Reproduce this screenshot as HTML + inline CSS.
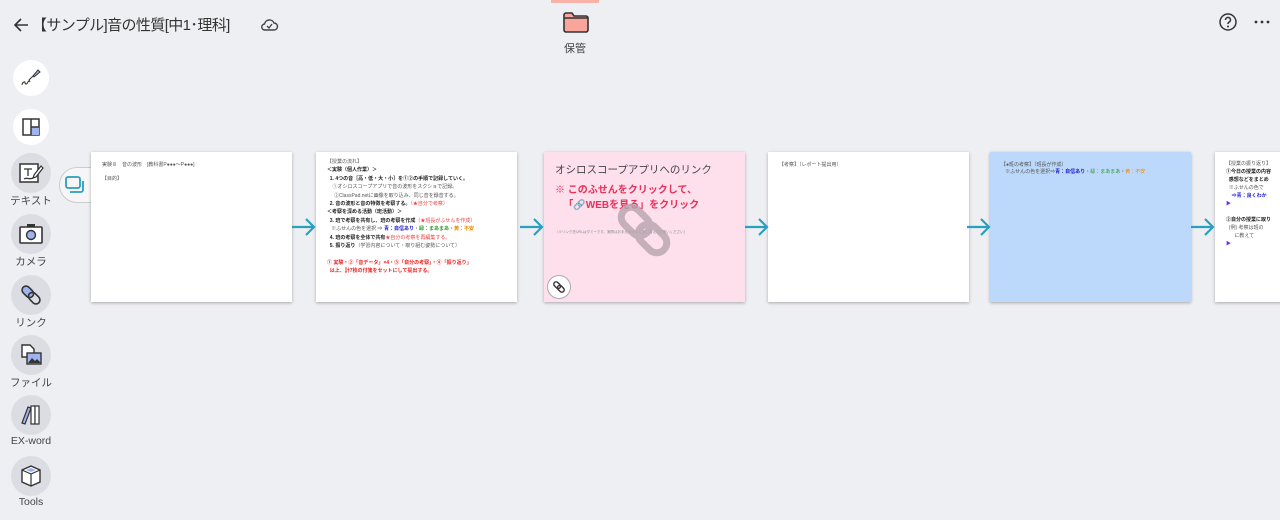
<!DOCTYPE html><html><head><meta charset="utf-8"><style>
*{margin:0;padding:0;box-sizing:border-box}
body{width:1280px;height:520px;background:#eeeff3;font-family:"Liberation Sans","Noto Sans CJK JP",sans-serif;position:relative;overflow:hidden;color:#333}
.a{position:absolute}
.card{position:absolute;top:152px;width:201px;height:150px;background:#fff;box-shadow:0 1px 3px rgba(0,0,0,.3);font-size:5px;line-height:7px;padding:10px 11px;color:#555;white-space:nowrap;overflow:hidden}
.circ{position:absolute;left:11px;width:40px;height:40px;border-radius:50%;background:#dcdde2;display:flex;align-items:center;justify-content:center}
.lab{position:absolute;left:0;width:62px;text-align:center;font-size:10.5px;color:#444}
.arr{position:absolute;top:217px}
b{color:#222}
</style></head><body>
<svg class="a" style="left:12px;top:16px" width="18" height="18" viewBox="0 0 18 18"><path d="M16 9H3M9 3L3 9l6 6" stroke="#333" stroke-width="1.6" fill="none"/></svg>
<div class="a" style="left:32px;top:14px;font-size:15px;color:#333;white-space:nowrap;letter-spacing:-0.6px">【サンプル]音の性質[中1･理科]</div>
<svg class="a" style="left:259px;top:14px" width="20" height="20" viewBox="0 0 20 20"><path d="M6 16h9a3.5 3.5 0 0 0 0-7 5 5 0 0 0-9.5 1A3 3 0 0 0 6 16z" stroke="#444" stroke-width="1.4" fill="none"/><path d="M8 12l2 2 3-4" stroke="#444" stroke-width="1.3" fill="none"/></svg>
<div class="a" style="left:551px;top:0;width:48px;height:3px;background:#f9b2a8"></div>
<svg class="a" style="left:562px;top:11px" width="28" height="22" viewBox="0 0 28 22"><path d="M2 4a2 2 0 0 1 2-2h6l2 3h12a2 2 0 0 1 2 2v12a2 2 0 0 1-2 2H4a2 2 0 0 1-2-2z" fill="#f9a59c" stroke="#333" stroke-width="1.6"/><path d="M2 7h24" stroke="#333" stroke-width="1.4"/></svg>
<div class="a" style="left:564px;top:40px;font-size:11px;color:#444">保管</div>
<svg class="a" style="left:1218px;top:12px" width="20" height="20" viewBox="0 0 20 20"><circle cx="10" cy="10" r="8" stroke="#333" stroke-width="1.5" fill="none"/><path d="M7.5 8a2.5 2.5 0 1 1 3.5 2.2c-.8.4-1 .9-1 1.8" stroke="#333" stroke-width="1.5" fill="none"/><circle cx="10" cy="14.5" r="1" fill="#333"/></svg>
<svg class="a" style="left:1254px;top:20px" width="16" height="4" viewBox="0 0 16 4"><circle cx="2" cy="2" r="1.4" fill="#333"/><circle cx="8" cy="2" r="1.4" fill="#333"/><circle cx="14" cy="2" r="1.4" fill="#333"/></svg>

<div class="circ" style="top:60px;background:#fff;width:36px;height:36px;left:13px"><svg width="24" height="24" viewBox="0 0 24 24"><path d="M14 10l5-6 2 2-6 5z" fill="#9fb4ee" stroke="#333" stroke-width="1"/><path d="M14 10l-4 4 1 2" stroke="#333" fill="none"/><path d="M10 15c-2 1-1 3-3 3s0-3-2-2-2 3-2 3" stroke="#333" fill="none"/></svg></div>
<div class="circ" style="top:109px;background:#fff;width:36px;height:36px;left:13px"><svg width="18" height="18" viewBox="0 0 18 18"><rect x="1" y="1" width="16" height="16" fill="#fff" stroke="#333" stroke-width="1.5"/><rect x="9" y="9" width="8" height="8" fill="#9fb4ee"/><path d="M9 1v16M9 9h8" stroke="#333" stroke-width="1.5"/></svg></div>
<div class="circ" style="top:153px"><svg width="26" height="24" viewBox="0 0 26 24"><rect x="2" y="3" width="18" height="18" fill="#fff" stroke="#333" stroke-width="1.5"/><path d="M6 8h8M10 8v7M6 18c3-2 5 1 9-1" stroke="#333" stroke-width="1.3" fill="none"/><path d="M16 14l7-9 2 2-7 9-3 1z" fill="#fff" stroke="#333" stroke-width="1.2"/></svg></div>
<div class="lab" style="top:193px">テキスト</div>
<div class="circ" style="top:214px"><svg width="26" height="22" viewBox="0 0 26 22"><rect x="9" y="1" width="8" height="4" fill="#333"/><rect x="2" y="4" width="22" height="16" rx="1" fill="#fff" stroke="#333" stroke-width="1.6"/><circle cx="13" cy="12" r="4.5" fill="#9fb4ee" stroke="#333" stroke-width="1.4"/></svg></div>
<div class="lab" style="top:254px">カメラ</div>
<div class="circ" style="top:275px"><svg width="24" height="24" viewBox="0 0 24 24"><g transform="rotate(-45 12 12)" fill="none" stroke="#333" stroke-width="1.6"><rect x="8" y="1" width="8" height="13" rx="4" fill="#9fb4ee"/><rect x="8" y="10" width="8" height="13" rx="4"/></g></svg></div>
<div class="lab" style="top:315px">リンク</div>
<div class="circ" style="top:335px"><svg width="24" height="24" viewBox="0 0 24 24"><path d="M3 2h8l4 4v8H3z" fill="#fff" stroke="#333" stroke-width="1.4"/><rect x="8" y="10" width="14" height="11" fill="#9fb4ee" stroke="#333" stroke-width="1.4"/><path d="M9 20l4-5 3 3 2-2 4 4" fill="#333"/></svg></div>
<div class="lab" style="top:375px">ファイル</div>
<div class="circ" style="top:395px"><svg width="24" height="24" viewBox="0 0 24 24"><path d="M3 20l6-16 3 1-6 16z" fill="#9fb4ee" stroke="#333" stroke-width="1.2"/><rect x="12" y="3" width="4" height="18" fill="#fff" stroke="#333" stroke-width="1.2"/><rect x="16" y="3" width="4" height="18" fill="#fff" stroke="#333" stroke-width="1.2"/></svg></div>
<div class="lab" style="top:435px">EX-word</div>
<div class="circ" style="top:456px"><svg width="24" height="24" viewBox="0 0 24 24"><path d="M12 2l9 4v12l-9 4-9-4V6z" fill="#fff" stroke="#333" stroke-width="1.4"/><path d="M3 6l9 4 9-4M12 10v12" stroke="#333" stroke-width="1.2" fill="none"/><path d="M7 6l5-2 5 2-5 2z" fill="#9fb4ee"/></svg></div>
<div class="lab" style="top:496px">Tools</div>

<div class="a" style="left:59px;top:167px;width:40px;height:36px;background:#f6f6f8;border:1px solid #ccc;border-radius:18px 0 0 18px"></div>
<svg class="a" style="left:65px;top:176px" width="20" height="18" viewBox="0 0 20 18"><rect x="1" y="1" width="14" height="11" rx="2" fill="none" stroke="#2aa0bf" stroke-width="1.8"/><path d="M18 5v9a2 2 0 0 1-2 2H5" stroke="#2aa0bf" stroke-width="1.8" fill="none"/></svg>

<div class="card" style="left:91px">実験８　音の波形　[教科書P●●●～P●●●]<br><br>【目的】</div>
<div class="card" style="left:316px;padding-top:6px;line-height:8.4px">【授業の流れ】<br><b>＜実験（個人作業）＞</b><br>&nbsp;&nbsp;<b>1. 4つの音［高・低・大・小］を①②の手順で記録していく。</b><br>&nbsp;&nbsp;&nbsp;&nbsp;①オシロスコープアプリで音の波形をスクショで記録。<br>&nbsp;&nbsp;&nbsp;&nbsp;&nbsp;②ClassPad.netに画像を取り込み、同じ音を録音する。<br>&nbsp;&nbsp;<b>2. 音の波形と音の特徴を考察する。</b><span style="color:#e44">（★自分で考察）</span><br><b>＜考察を深める活動（班活動）＞</b><br>&nbsp;&nbsp;<b>3. 班で考察を共有し、班の考察を作成</b><span style="color:#e44">（★班長がふせんを作成）</span><br>&nbsp;&nbsp;&nbsp;※ふせんの色を選択 ⇒ <b style="color:#22c">青：自信あり</b>・<b style="color:#393">緑：まあまあ</b>・<b style="color:#e80">黄：不安</b><br>&nbsp;&nbsp;<b>4. 班の考察を全体で共有</b><span style="color:#e44">★自分の考察を再編集する。</span><br>&nbsp;&nbsp;<b>5. 振り返り</b>（学習内容について・取り組む姿勢について）<br><br><b style="color:#e22">① 実験・②「音データ」×4・③「自分の考察」・④「振り返り」<br>&nbsp;&nbsp;以上、計7枚の付箋をセットにして提出する。</b></div>
<div class="card" style="left:544px;background:#fde0ec;padding:10px 11px;color:#444">
<div style="font-size:10.5px;line-height:16px">オシロスコープアプリへのリンク</div>
<div style="font-size:10px;line-height:15px;color:#e8305a;font-weight:bold;margin-top:5px">※ このふせんをクリックして、<br>&nbsp;&nbsp;&nbsp;「🔗WEBを見る」をクリック</div>
<div style="font-size:3.5px;margin-top:16px;color:#888">（※リンク先URLはダミーです。実際はお手元のURLに差し替えてお使いください）</div>
<svg class="a" style="left:70px;top:48px" width="60" height="60" viewBox="0 0 60 60"><g transform="rotate(-45 30 30)" fill="none" stroke="#b8a4ae" stroke-width="7" opacity=".8"><rect x="20" y="2" width="20" height="32" rx="10"/><rect x="20" y="26" width="20" height="32" rx="10"/></g></svg>
<div class="a" style="left:3px;top:123px;width:24px;height:24px;border-radius:50%;background:#fff;border:1px solid #aaa"></div>
<svg class="a" style="left:8px;top:128px" width="14" height="14" viewBox="0 0 24 24"><g transform="rotate(-45 12 12)" fill="none" stroke="#333" stroke-width="2.4"><rect x="8" y="1" width="8" height="13" rx="4"/><rect x="8" y="10" width="8" height="13" rx="4"/></g></svg>
</div>
<div class="card" style="left:768px">【考察】（レポート提出用）</div>
<div class="card" style="left:990px;background:#bcd9fb">【●班の考察】（班長が作成）<br>&nbsp;&nbsp;&nbsp;※ふせんの色を選択⇒<b style="color:#22c">青：自信あり</b>・<span style="color:#393">緑：まあまあ</span>・<span style="color:#e80">黄：不安</span></div>
<div class="card" style="left:1215px;padding-top:8px;line-height:8px">【授業の振り返り】<br><b>①今日の授業の内容</b><br>&nbsp;&nbsp;<b>感想などをまとめ</b><br>&nbsp;&nbsp;※ふせんの色で<br>&nbsp;&nbsp;&nbsp;&nbsp;<b style="color:#22c">⇒青：良くわか</b><br><span style="color:#73c">▶</span><br><br><b>②自分の授業に取り</b><br>&nbsp;&nbsp;(例) 考察は班の<br>&nbsp;&nbsp;&nbsp;&nbsp;&nbsp;&nbsp;に教えて<br><span style="color:#73c">▶</span></div>

<svg class="arr" style="left:292px" width="24" height="20" viewBox="0 0 24 20"><path d="M0 10h22M14 2l8 8-8 8" stroke="#2aa0bf" stroke-width="2.2" fill="none"/></svg>
<svg class="arr" style="left:520px" width="24" height="20" viewBox="0 0 24 20"><path d="M0 10h22M14 2l8 8-8 8" stroke="#2aa0bf" stroke-width="2.2" fill="none"/></svg>
<svg class="arr" style="left:745px" width="24" height="20" viewBox="0 0 24 20"><path d="M0 10h22M14 2l8 8-8 8" stroke="#2aa0bf" stroke-width="2.2" fill="none"/></svg>
<svg class="arr" style="left:967px" width="24" height="20" viewBox="0 0 24 20"><path d="M0 10h22M14 2l8 8-8 8" stroke="#2aa0bf" stroke-width="2.2" fill="none"/></svg>
<svg class="arr" style="left:1191px" width="24" height="20" viewBox="0 0 24 20"><path d="M0 10h22M14 2l8 8-8 8" stroke="#2aa0bf" stroke-width="2.2" fill="none"/></svg>
</body></html>
